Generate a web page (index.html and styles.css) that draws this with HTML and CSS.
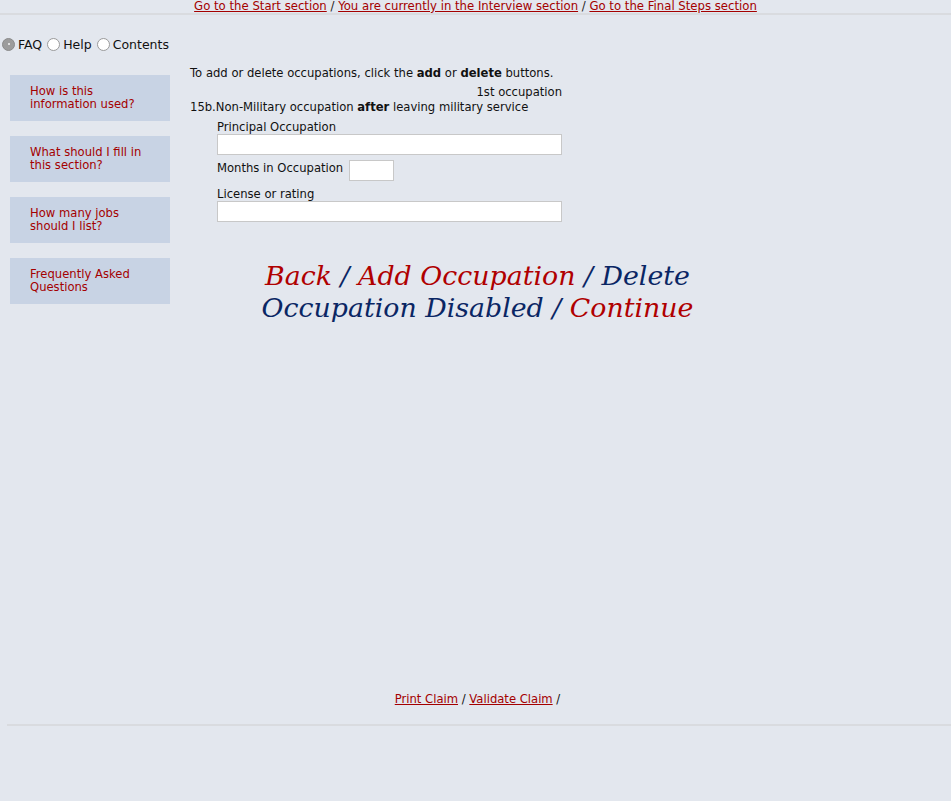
FILE: index.html
```html
<!DOCTYPE html>
<html>
<head>
<meta charset="utf-8">
<link rel="stylesheet" href="styles.css">
</head>
<body>
<div class="topnav">
  <a href="#">Go to the Start section</a> / <a href="#">You are currently in the Interview section</a> / <a href="#">Go to the Final Steps section</a>
</div>
<div class="layout">
  <div class="side">
    <div class="radios">
      <label class="r"><span class="radio on"></span>FAQ</label>
      <label class="r"><span class="radio"></span>Help</label>
      <label class="r"><span class="radio"></span>Contents</label>
    </div>
    <div class="boxes">
      <div class="box">How is this information used?</div>
      <div class="box">What should I fill in this section?</div>
      <div class="box">How many jobs should I list?</div>
      <div class="box">Frequently Asked Questions</div>
    </div>
  </div>
  <div class="main">
    <div class="form">
      <p class="intro">To add or delete occupations, click the <b>add</b> or <b>delete</b> buttons.</p>
      <div class="ordinal">1st occupation</div>
      <div class="question">15b.Non-Military occupation <b>after</b> leaving military service</div>
      <div class="fields">
        <div class="lbl">Principal Occupation</div>
        <div class="input wide"></div>
        <div class="inline"><span class="lbl">Months in Occupation</span><span class="input small"></span></div>
        <div class="lbl">License or rating</div>
        <div class="input wide"></div>
      </div>
    </div>
    <div class="actions">
      <div class="line"><a class="red" href="#">Back</a> / <a class="red" href="#">Add Occupation</a> / <span class="blue">Delete</span></div>
      <div class="line"><span class="blue">Occupation Disabled</span> / <a class="red" href="#">Continue</a></div>
    </div>
    <div class="bottomlinks">
      <a href="#">Print Claim</a> / <a href="#">Validate Claim</a> /
    </div>
  </div>
</div>
<div class="bottomrule"></div>
</body>
</html>
```
FILE: styles.css
```css
html, body {
  margin: 0;
  padding: 0;
  background: #e3e7ee;
}
body {
  font-family: "DejaVu Sans", Verdana, sans-serif;
  font-size: 11.6px;
  color: #111;
  width: 951px;
  height: 801px;
  overflow: hidden;
}
a {
  color: #a40000;
}
.topnav {
  text-align: center;
  font-size: 11.7px;
  line-height: 13px;
  height: 13px;
  border-bottom: 2px solid #d9dbdf;
  color: #222;
}
.layout {
  display: flex;
  height: 709px;
}
.side {
  width: 190px;
  flex: none;
}
.radios {
  display: flex;
  align-items: center;
  padding: 21px 0 0 2px;
  height: 16px;
  font-size: 12.5px;
}
.r {
  display: flex;
  align-items: center;
  margin-right: 5px;
}
.radio {
  display: inline-block;
  width: 13px;
  height: 13px;
  border-radius: 50%;
  background: #fff;
  border: 1px solid #9a9a9a;
  box-sizing: border-box;
  margin-right: 3px;
  position: relative;
}
.radio.on {
  background: #9c9c9c;
  border-color: #8a8a8a;
}
.radio.on::after {
  content: "";
  position: absolute;
  left: 4.5px;
  top: 4.5px;
  width: 2px;
  height: 2px;
  border-radius: 50%;
  background: #f4f4f4;
}
.boxes {
  display: flex;
  flex-direction: column;
  gap: 15px;
  margin: 23px 0 0 10px;
}
.box {
  width: 160px;
  height: 46px;
  box-sizing: border-box;
  background: #c8d3e4;
  color: #a40000;
  padding: 10px 26px 0 20px;
  line-height: 13px;
  font-size: 11.6px;
}
.main {
  width: 575px;
  display: flex;
  flex-direction: column;
}
.form {
  width: 372px;
  padding-top: 51px;
}
.intro {
  margin: 0;
  line-height: 14px;
}
.ordinal {
  text-align: right;
  margin-top: 5px;
  line-height: 14px;
}
.question {
  margin-top: 1px;
  line-height: 15px;
}
.fields {
  padding-left: 27px;
  padding-top: 5px;
}
.lbl {
  line-height: 14px;
  display: block;
}
.input {
  display: block;
  background: #fff;
  border: 1px solid #c8c8c8;
  box-sizing: border-box;
  height: 21px;
}
.wide {
  width: 345px;
  margin: 0 0 5px;
}
.inline {
  display: flex;
  align-items: center;
  gap: 6px;
  margin-bottom: 6px;
}
.inline .lbl { display: inline; margin-top: -6px; }
.small {
  width: 45px;
}
.actions {
  margin-top: 33px;
  text-align: center;
  font-family: "DejaVu Serif", Georgia, serif;
  font-style: italic;
  font-size: 26.8px;
  line-height: 32px;
  color: #0a2664;
}
.actions a { text-decoration: none; }
.actions .red { color: #b00000; }
.actions .blue { color: #0a2664; }
.bottomlinks {
  margin-top: auto;
  text-align: center;
  line-height: 14px;
  padding-bottom: 18px;
}
.bottomrule {
  margin-left: 7px;
  border-top: 2px solid #d9dbdf;
}
```
